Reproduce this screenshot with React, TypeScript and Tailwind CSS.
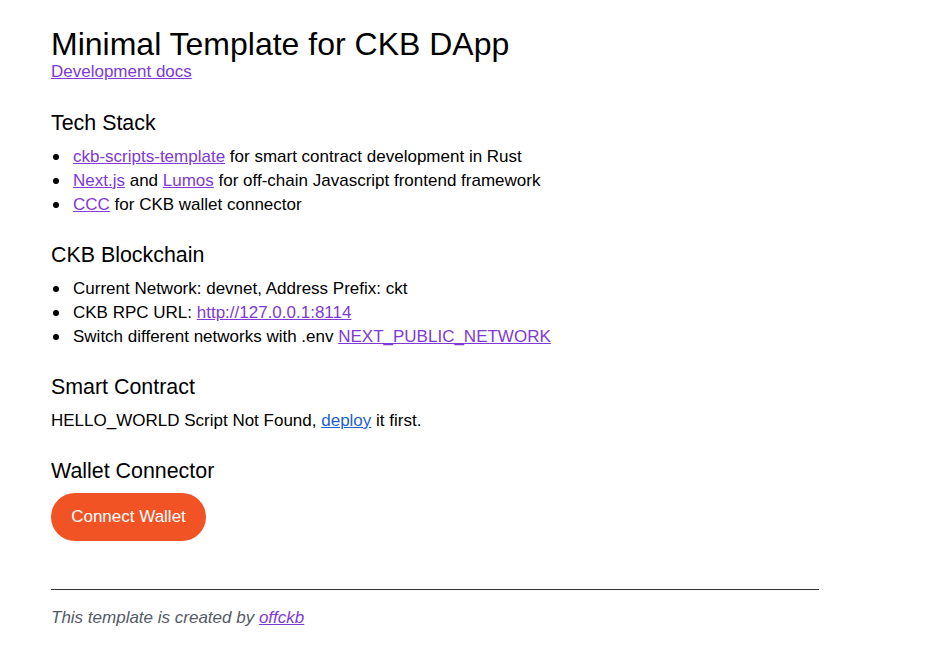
import React from "react";

const link = "text-[#7e3ad6] underline";

function Li({ children }: { children: React.ReactNode }) {
  return (
    <li className="flex items-center">
      <span className="w-[22px] shrink-0 flex items-center">
        <span className="ml-[2px] block w-[6px] h-[6px] rounded-full bg-black" />
      </span>
      <span>{children}</span>
    </li>
  );
}

export default function App() {
  return (
    <div
      className="min-h-screen bg-white text-black pl-[51px] pt-[28px]"
      style={{ fontFamily: '"Liberation Sans", Arial, sans-serif' }}
    >
      <div className="w-[768px]">
        <h1 className="text-[32px] leading-[32px]">Minimal Template for CKB DApp</h1>
        <a href="#" className={`${link} text-[17px] leading-[24px] block w-fit`}>
          Development docs
        </a>

        <h2 className="text-[21.4px] leading-[28px] mt-[25px]">Tech Stack</h2>
        <ul className="mt-[8px] text-[17px] leading-[24px]">
          <Li>
            <a href="#" className={link}>ckb-scripts-template</a> for smart contract development in Rust
          </Li>
          <Li>
            <a href="#" className={link}>Next.js</a> and <a href="#" className={link}>Lumos</a> for off-chain Javascript frontend framework
          </Li>
          <Li>
            <a href="#" className={link}>CCC</a> for CKB wallet connector
          </Li>
        </ul>

        <h2 className="text-[21.4px] leading-[28px] mt-[24px]">CKB Blockchain</h2>
        <ul className="mt-[8px] text-[17px] leading-[24px]">
          <Li>Current Network: devnet, Address Prefix: ckt</Li>
          <Li>
            CKB RPC URL: <a href="#" className={link}>http://127.0.0.1:8114</a>
          </Li>
          <Li>
            Switch different networks with .env <a href="#" className={link}>NEXT_PUBLIC_NETWORK</a>
          </Li>
        </ul>

        <h2 className="text-[21.4px] leading-[28px] mt-[24px]">Smart Contract</h2>
        <p className="mt-[8px] text-[17px] leading-[24px]">
          HELLO_WORLD Script Not Found, <a href="#" className="text-[#1f5fd6] underline">deploy</a> it first.
        </p>

        <h2 className="text-[21.4px] leading-[28px] mt-[24px]">Wallet Connector</h2>
        <button className="mt-[8px] h-[48px] w-[155px] rounded-full bg-[#f15324] text-white text-[17px]">
          Connect Wallet
        </button>

        <div className="mt-[48px] border-t border-[#333333] w-[768px]" />
        <p className="mt-[16px] text-[17px] leading-[24px] italic text-[#555b66]">
          This template is created by <a href="#" className={link}>offckb</a>
        </p>
      </div>
    </div>
  );
}
